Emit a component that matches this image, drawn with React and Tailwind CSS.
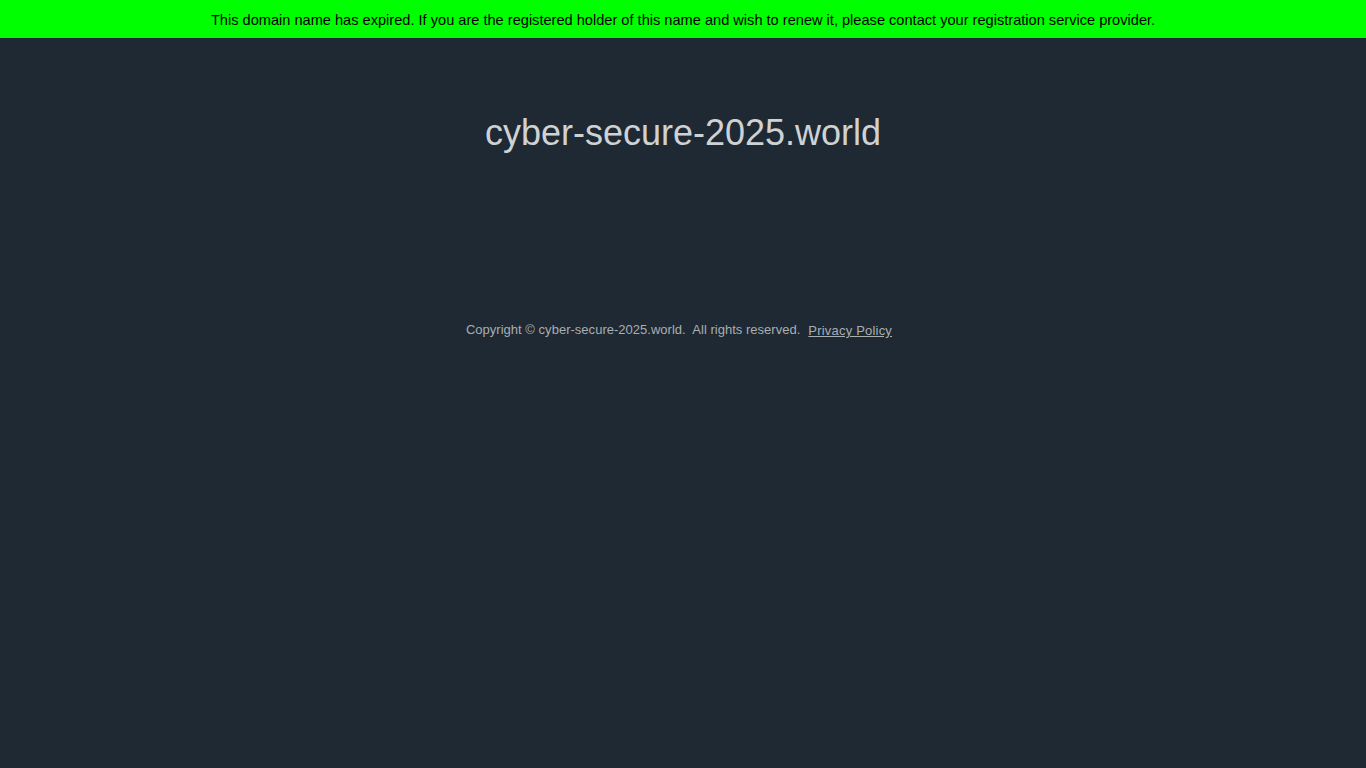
export default function App() {
  return (
    <div className="min-h-screen w-full bg-[#1e2933] font-['Liberation_Sans',Arial,sans-serif]">
      {/* Expiry banner */}
      <div className="h-[38px] w-full bg-[#00ff00] flex items-center justify-center pt-[3px]">
        <p className="text-[14.6px] text-black">
          This domain name has expired. If you are the registered holder of this name and wish to renew it, please contact your registration service provider.
        </p>
      </div>

      <div className="flex flex-col items-center">
        <h1 className="mt-[73px] text-[36px] leading-[44px] text-[#cfd2d4]">cyber-secure-2025.world</h1>

        <div className="mt-[165px] pr-2 flex items-baseline text-[13px] text-[#a9aeb2]">
          <span className="tracking-[0.02px]">Copyright © cyber-secure-2025.world.&nbsp; All rights reserved.</span>
          <a href="#" className="ml-2 underline translate-y-px tracking-[0.2px]">Privacy Policy</a>
        </div>
      </div>
    </div>
  );
}
